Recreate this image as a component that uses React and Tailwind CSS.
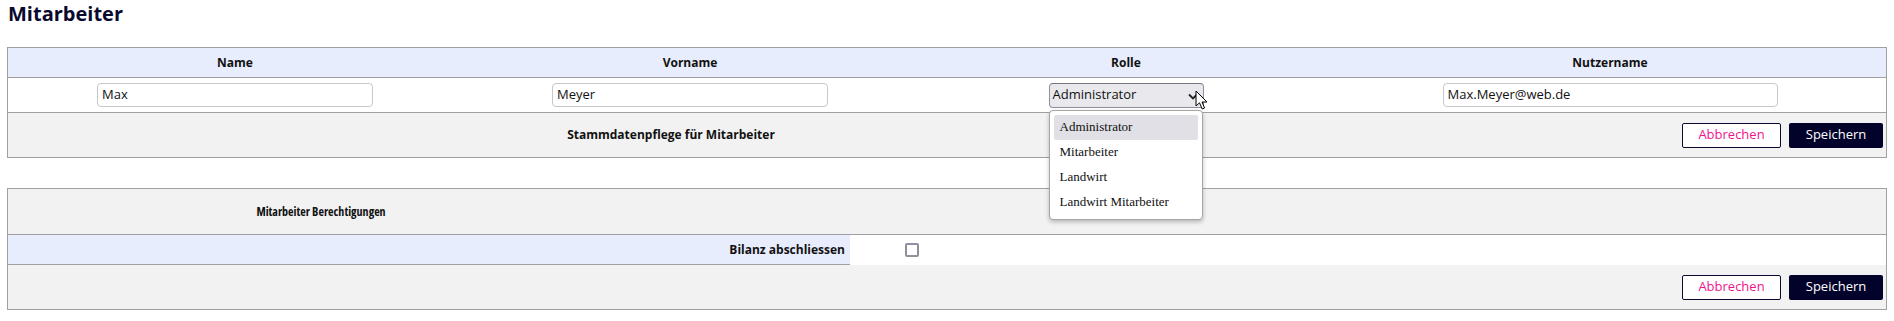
import React from "react";

const font = { fontFamily: '"Open Sans", "Noto Sans", sans-serif' };

function Input({ value, w }) {
  return (
    <div
      className={`h-[24px] ${w} border border-[#c8c8c8] rounded-[4px] bg-white flex items-center pl-[4px] text-[13px] text-[#111]`}
    >
      {value}
    </div>
  );
}

function Buttons() {
  return (
    <div className="flex-1 flex justify-end items-center gap-[8px] pr-[3px]">
      <button className="w-[99px] h-[25px] border border-[#0a0a2e] rounded-[2px] bg-white text-[13px] text-[#f0148c]">
        Abbrechen
      </button>
      <button className="w-[94px] h-[25px] rounded-[2px] bg-[#02022a] text-[13px] text-white">
        Speichern
      </button>
    </div>
  );
}

function Cursor() {
  return (
    <svg
      className="absolute left-[146px] top-[7px]"
      width="14"
      height="21"
      viewBox="0 0 14 21"
    >
      <path
        d="M1 1 L1 16 L4.5 12.8 L7.2 19 L9.6 18 L7 12 L12 12 Z"
        fill="#fff"
        stroke="#000"
        strokeWidth="1"
        strokeLinejoin="round"
      />
    </svg>
  );
}

export default function App() {
  return (
    <div className="px-[7px] bg-white min-h-[321px] text-[#111]" style={font}>
      <div className="h-[28px] leading-[28px] text-[20px] font-bold text-[#0a0a2e] pl-[1px]">
        Mitarbeiter
      </div>

      <div className="mt-[19px] border border-[#a0a0a0]">
        <div className="grid grid-cols-[454px_456px_416px_1fr] h-[30px] bg-[#e8edfd] border-b border-[#a0a0a0] items-center text-center text-[12px] font-bold">
          <div>Name</div>
          <div>Vorname</div>
          <div>Rolle</div>
          <div>Nutzername</div>
        </div>
        <div className="grid grid-cols-[454px_456px_416px_1fr] h-[35px] bg-white border-b border-[#a0a0a0] items-center">
          <div className="flex justify-center">
            <Input value="Max" w="w-[276px]" />
          </div>
          <div className="flex justify-center">
            <Input value="Meyer" w="w-[276px]" />
          </div>
          <div className="flex justify-center">
            <div className="relative w-[155px]">
              <div className="h-[25px] w-[155px] bg-[#e9e9ed] border border-[#8f8f9d] border-t-[#767680] rounded-[4px] flex items-center pl-[3px] text-[13px] text-[#111]">
                Administrator
                <svg
                  className="absolute left-[139px] top-[10px]"
                  width="10"
                  height="7"
                  viewBox="0 0 10 7"
                >
                  <path
                    d="M1 1.5 L5 5.5 L9 1.5"
                    fill="none"
                    stroke="#222"
                    strokeWidth="1.8"
                  />
                </svg>
              </div>
              <Cursor />
              <div
                className="absolute left-0 top-[27px] w-[154px] bg-white border border-[#a6a6a6] rounded-[4px] shadow-[0_2px_4px_rgba(0,0,0,0.25)] p-[4px] z-10 text-[13px] text-[#111]"
                style={{ fontFamily: '"Liberation Serif", "Times New Roman", serif' }}
              >
                <div className="h-[25px] flex items-center pl-[6px] bg-[#e0e0e6] rounded-[2px]">
                  Administrator
                </div>
                <div className="h-[25px] flex items-center pl-[6px]">Mitarbeiter</div>
                <div className="h-[25px] flex items-center pl-[6px]">Landwirt</div>
                <div className="h-[25px] flex items-center pl-[6px]">Landwirt Mitarbeiter</div>
              </div>
            </div>
          </div>
          <div className="flex justify-center">
            <Input value="Max.Meyer@web.de" w="w-[335px]" />
          </div>
        </div>
        <div className="flex h-[44px] bg-[#f2f2f2] items-center">
          <div className="w-[1326px] text-center text-[12px] font-bold">
            Stammdatenpflege für Mitarbeiter
          </div>
          <Buttons />
        </div>
      </div>

      <div className="mt-[30px] border border-[#a0a0a0]">
        <div className="flex h-[46px] bg-[#f2f2f2] border-b border-[#a0a0a0] items-center">
          <div className="w-[626px] text-center text-[12px] font-bold font-stretch-condensed">
            Mitarbeiter Berechtigungen
          </div>
        </div>
        <div className="flex h-[30px] bg-white">
          <div className="w-[842px] h-[30px] bg-[#e8edfd] border-b border-[#a0a0a0] flex items-center justify-end pr-[5px] text-[12px] font-bold">
            Bilanz abschliessen
          </div>
          <div className="flex-1 flex items-center pl-[55px]">
            <div className="w-[14px] h-[14px] border-2 border-[#8f8f9d] rounded-[2px] bg-white" />
          </div>
        </div>
        <div className="flex h-[44px] bg-[#f2f2f2] items-center">
          <Buttons />
        </div>
      </div>
    </div>
  );
}
